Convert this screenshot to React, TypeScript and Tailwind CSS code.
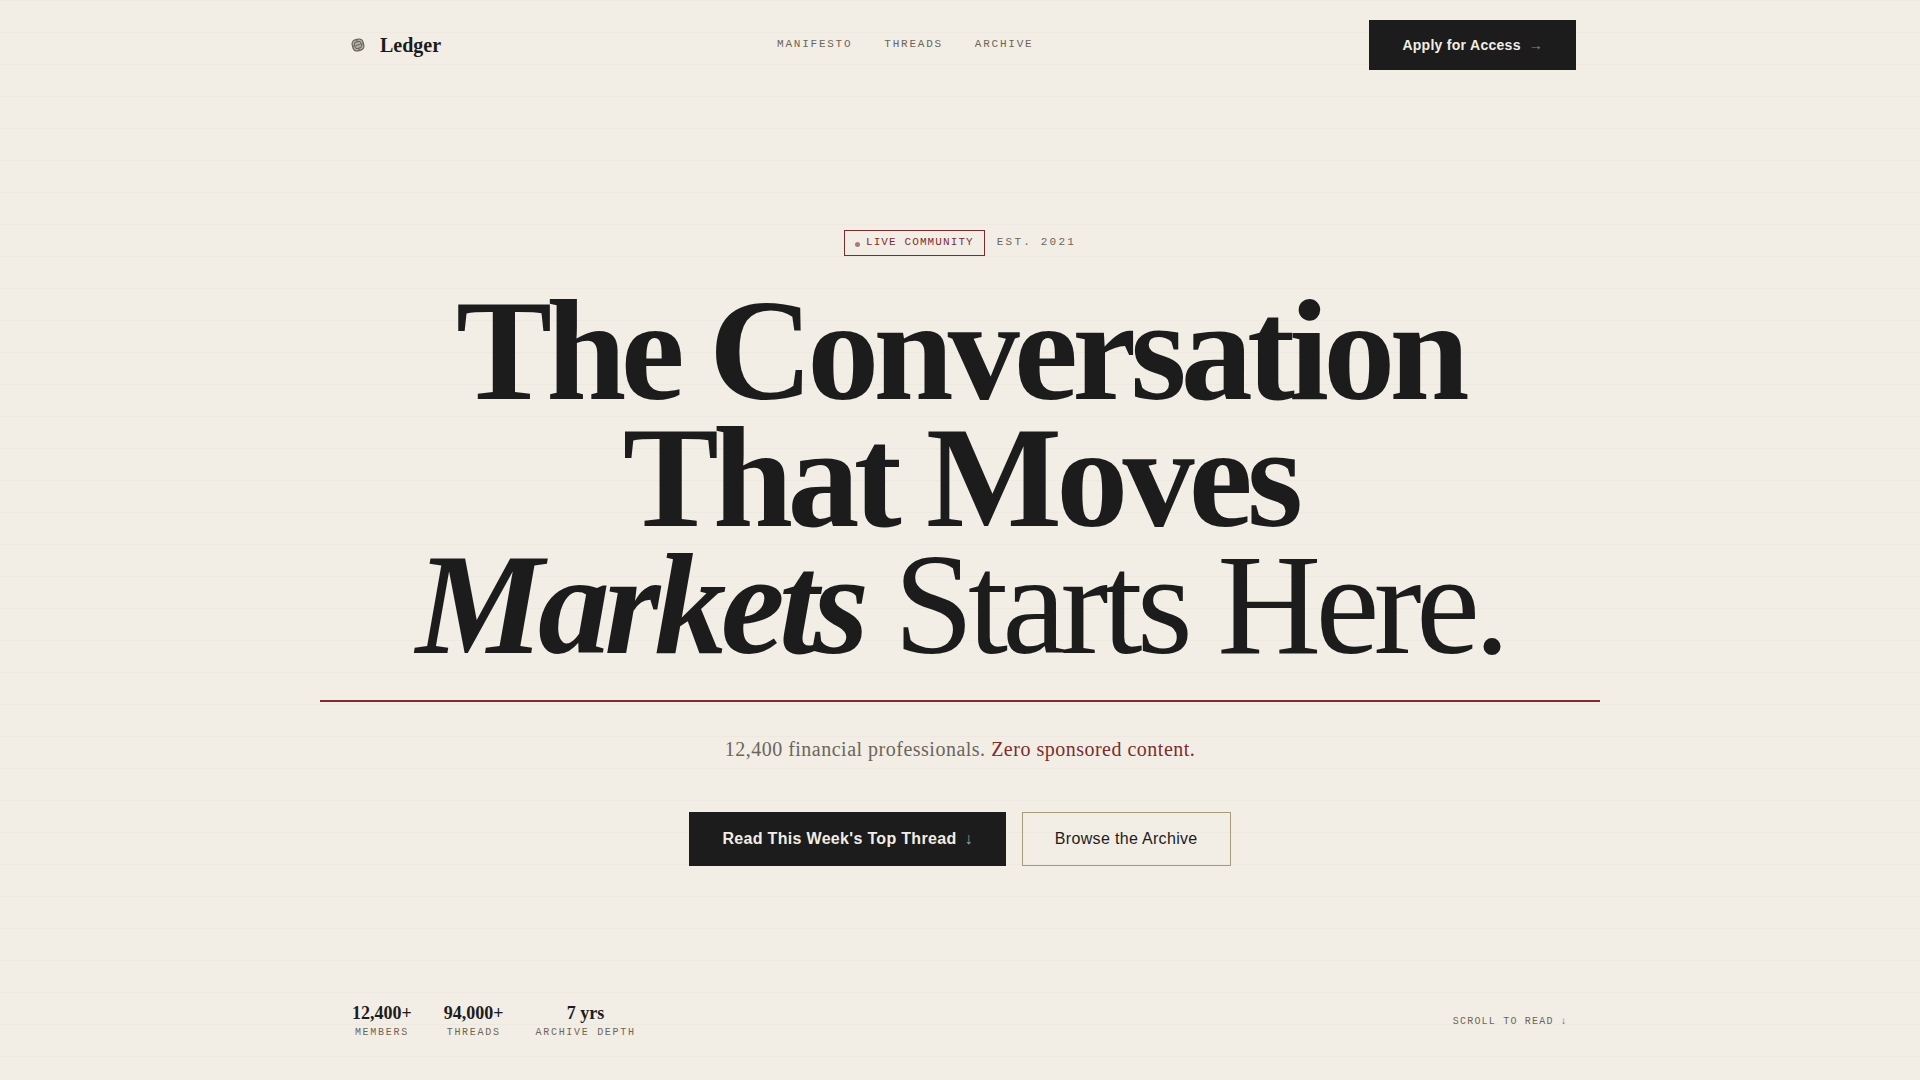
import React from "react";

interface Stat {
  value: string;
  label: string;
}

const navLinks = ["Manifesto", "Threads", "Archive"];

const stats: Stat[] = [
  { value: "12,400+", label: "Members" },
  { value: "94,000+", label: "Threads" },
  { value: "7 yrs", label: "Archive Depth" },
];

const serif = "font-['Liberation_Serif',serif]";
const sans = "font-['Liberation_Sans',sans-serif]";
const mono = "font-['Liberation_Mono',monospace]";

function LogoMark() {
  return (
    <svg viewBox="0 0 28 28" className="size-7" fill="none" aria-hidden="true">
      <g transform="rotate(-14 14 14)" stroke="#68635a">
        <rect x="8.4" y="8.4" width="11.2" height="11.2" rx="4" fill="#b3aea2" strokeWidth="1.2" />
        <rect x="10.8" y="10.8" width="6.4" height="6.4" rx="1.8" strokeWidth="1" />
        <path d="M12 14h4M14 8.4v2.4M14 17.2v2.4M8.4 14h2.4M17.2 14h2.4" strokeWidth="0.9" />
      </g>
    </svg>
  );
}

function Header() {
  return (
    <header className="mx-auto flex w-full max-w-7xl items-center justify-between px-6 py-5">
      <a href="#" className={`${serif} flex items-center gap-2 text-xl font-bold`}>
        <LogoMark />
        Ledger
      </a>
      <nav className={`${mono} flex gap-8 pb-0.5 text-[11px] uppercase tracking-[0.16em] text-[#6b665a]`}>
        {navLinks.map((link) => (
          <a key={link} href={`#${link.toLowerCase()}`}>
            {link}
          </a>
        ))}
      </nav>
      <button
        type="button"
        className={`${sans} flex h-[50px] items-center gap-2 border border-[#1c1c1c] bg-[#1c1c1c] px-8 text-sm font-bold tracking-[0.02em] text-[#f2ede5]`}
      >
        Apply for Access
        <span className="font-normal opacity-50">→</span>
      </button>
    </header>
  );
}

function Hero() {
  return (
    <main className="mx-auto flex w-full max-w-7xl flex-1 flex-col items-center justify-center pt-[5px] text-center">
      <div className={`${mono} flex items-center gap-3 text-[11px] uppercase`}>
        <span className="flex h-[26px] items-center gap-1.5 border border-[#7b2d2d] px-2.5 pb-0.5 tracking-[0.1em] text-[#7b2d2d]">
          <span className="mt-1 size-[5px] rounded-full bg-[#7b2d2d] opacity-60" />
          Live Community
        </span>
        <span className="pb-0.5 tracking-[0.2em] text-[#6b665a]">Est. 2021</span>
      </div>

      <h1 className={`${serif} mt-8 text-[144px] leading-[0.88] font-bold tracking-[-0.04em]`}>
        The Conversation
        <br />
        That Moves
        <br />
        <em>Markets</em> <span className="font-normal">Starts Here.</span>
      </h1>

      <hr className="mt-[31px] w-full border-t-2 border-[#7b2d2d]" />

      <p className={`${serif} mt-8 text-xl leading-[30px] tracking-wide text-[#6b665a]`}>
        12,400 financial professionals.{" "}
        <span className="text-[#7b2d2d]">Zero sponsored content.</span>
      </p>

      <div className={`${sans} mt-12 flex gap-4 tracking-[0.02em]`}>
        <button
          type="button"
          className="flex h-[54px] items-center gap-2 border border-[#1c1c1c] bg-[#1c1c1c] px-8 font-bold text-[#f2ede5]"
        >
          Read This Week's Top Thread
          <span className="font-normal opacity-60">↓</span>
        </button>
        <button
          type="button"
          className="h-[54px] border border-[#a89b7a] px-8"
        >
          Browse the Archive
        </button>
      </div>
    </main>
  );
}

function Footer() {
  return (
    <footer className="mx-auto flex w-full max-w-7xl items-center justify-between px-8 pb-[39px]">
      <dl className="flex gap-8 text-center">
        {stats.map((stat) => (
          <div key={stat.label} className="flex flex-col-reverse">
            <dt className={`${mono} text-[10px] leading-4 uppercase tracking-[0.17em] text-[#6b665a]`}>
              {stat.label}
            </dt>
            <dd className={`${serif} text-lg leading-6 font-bold`}>{stat.value}</dd>
          </div>
        ))}
      </dl>
      <a
        href="#thread"
        className={`${mono} text-[10px] uppercase tracking-[0.12em] text-[#6b665a]`}
      >
        Scroll to read ↓
      </a>
    </footer>
  );
}

export default function App() {
  return (
    <div className="flex min-h-screen flex-col bg-[#f2ede5] bg-[repeating-linear-gradient(to_bottom,#ede8e0_0px,#ede8e0_1px,transparent_1px,transparent_32px)] text-[#1c1c1c]">
      <Header />
      <Hero />
      <Footer />
    </div>
  );
}
